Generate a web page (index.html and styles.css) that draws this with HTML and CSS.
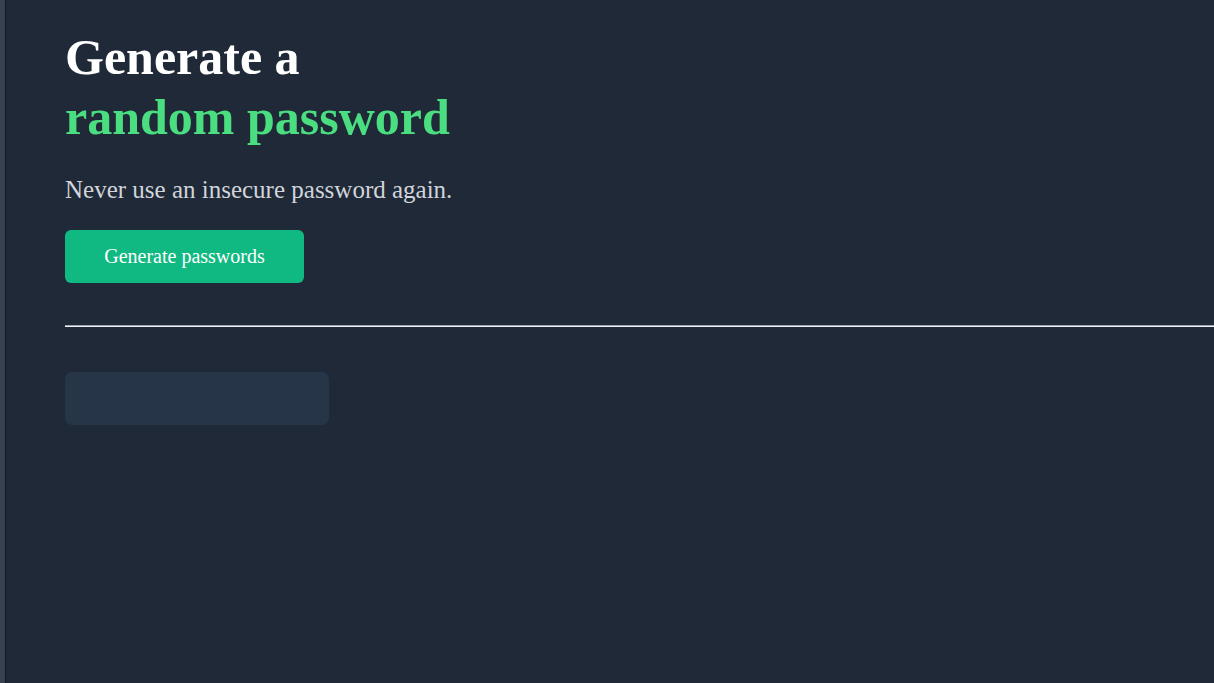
FILE: index.html
```html
<!DOCTYPE html>
<html lang="en">
<head>
<meta charset="utf-8">
<title>Password Generator</title>
<link rel="stylesheet" href="styles.css">
</head>
<body>
<div class="layout">
  <aside class="rail"></aside>
  <main class="main">
    <h1 class="title">Generate a<br><span class="accent">random password</span></h1>
    <p class="subtitle">Never use an insecure password again.</p>
    <button class="btn" type="button">Generate passwords</button>
    <div class="divider"></div>
    <div class="output"></div>
  </main>
</div>
</body>
</html>
```
FILE: styles.css
```css
html, body {
  margin: 0;
  padding: 0;
  height: 100%;
}
body {
  background: #1f2937;
  font-family: "Liberation Serif", "Times New Roman", serif;
  overflow: hidden;
}
.layout {
  display: flex;
  min-height: 100%;
}
.rail {
  width: 5px;
  flex: 0 0 5px;
  background: #374151;
  border-right: 1px solid #111827;
}
.main {
  flex: 1;
  padding: 27px 0 0 59px;
  display: flex;
  flex-direction: column;
  align-items: flex-start;
}
.title {
  margin: 0;
  font-size: 50px;
  line-height: 60px;
  font-weight: bold;
  color: #ffffff;
}
.accent {
  color: #4ade80;
}
.subtitle {
  margin: 29px 0 0;
  font-size: 25px;
  color: #d1d5db;
}
.btn {
  margin-top: 26px;
  background: #10b981;
  color: #ffffff;
  border: none;
  border-radius: 6px;
  font-family: "Liberation Serif", "Times New Roman", serif;
  font-size: 20px;
  width: 239px;
  height: 53px;
  padding: 0;
  cursor: pointer;
}
.divider {
  align-self: stretch;
  margin-top: 42px;
  height: 0;
  border-top: 1px solid #9ca3af;
  border-bottom: 1px solid #f3f4f6;
}
.output {
  margin-top: 45px;
  width: 264px;
  height: 53px;
  background: #263548;
  border-radius: 7px;
}
```
